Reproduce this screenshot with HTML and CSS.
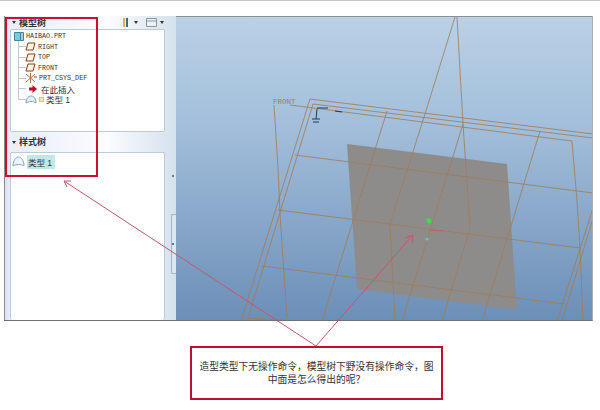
FILE: index.html
```html
<!DOCTYPE html>
<html lang="zh-CN">
<head>
    <meta charset="UTF-8">
    <meta name="viewport" content="width=device-width, initial-scale=1.0">
    <title>造型类型</title>
    <link rel="stylesheet" href="styles.css">
</head>
<body>
    <div class="topline"></div>

    <div class="shot">
        <div class="sidebar">
            <div class="trees">
                <div class="tree-head">
                    <span class="caret"></span>
                    <span class="tree-title">模型树</span>
                    <div class="tools">
                        <svg width="9" height="9" viewBox="0 0 9 9"><path d="M1 0h2v9H1z" fill="#d9b84a"/><path d="M4 0h2v9H4z" fill="#39699c"/></svg>
                        <span class="caret small"></span>
                        <svg class="tool-box" width="11" height="9" viewBox="0 0 11 9"><path d="M.5.5h10v8H.5zM.5 3h10" fill="#eef2f6" stroke="#8a949e"/></svg>
                        <span class="caret small"></span>
                    </div>
                </div>

                <div class="panel panel-model">
                    <div class="row root">
                        <svg width="10" height="10" viewBox="0 0 10 10"><path d="M.5 1.5h6v8h-6z" fill="#6fd0d6" stroke="#48809c"/><path d="M6.5 1.5h3v8h-3z" fill="#b6c4d6" stroke="#48809c"/></svg>
                        <span>HAIBAO.PRT</span>
                    </div>
                    <div class="row branch">
                        <svg class="plane" width="11" height="9" viewBox="0 0 11 9"><path d="M3 1h7L8 8H1z" fill="#fff6dc" stroke="#8a3a1e"/></svg>
                        <span>RIGHT</span>
                    </div>
                    <div class="row branch">
                        <svg class="plane" width="11" height="9" viewBox="0 0 11 9"><path d="M3 1h7L8 8H1z" fill="#fff6dc" stroke="#8a3a1e"/></svg>
                        <span>TOP</span>
                    </div>
                    <div class="row branch">
                        <svg class="plane" width="11" height="9" viewBox="0 0 11 9"><path d="M3 1h7L8 8H1z" fill="#fff6dc" stroke="#8a3a1e"/></svg>
                        <span>FRONT</span>
                    </div>
                    <div class="row branch">
                        <svg class="plane" width="12" height="10" viewBox="0 0 12 10"><path d="M1 1l9 8M10 1L1 9M5.500 0v10" fill="none" stroke="#a8734a"/><path d="M9 4h3" stroke="#c03020"/></svg>
                        <span>PRT_CSYS_DEF</span>
                    </div>
                    <div class="row branch">
                        <svg class="insert" width="8" height="8" viewBox="0 0 8 8"><path d="M0 2.500h3.500V0L8 4 3.500 8V5.500H0z" fill="#b80f24"/></svg>
                        <span class="cjk">在此插入</span>
                    </div>
                    <div class="row branch">
                        <svg class="plane" width="12" height="9" viewBox="0 0 12 9"><path d="M1 8C1 3 4 1 6.500 1S11 4 11 8C8 6 4 6 1 8z" fill="#dff0f6" stroke="#7fa2bd"/></svg>
                        <span class="mark"></span>
                        <span class="cjk">类型 1</span>
                    </div>
                </div>

                <div class="tree-head second">
                    <span class="caret"></span>
                    <span class="tree-title">样式树</span>
                </div>

                <div class="panel panel-style">
                    <div class="row style-row">
                        <svg width="13" height="11" viewBox="0 0 13 11"><path d="M1 10C1 4 4 1 6.500 1S12 4 12 10C9 8 4 8 1 10z" fill="#eaf3f8" stroke="#8ba6bd"/></svg>
                        <span class="cjk selected">类型 1</span>
                    </div>
                </div>
            </div>

            <div class="sash">
                <span class="sash-dot"></span>
                <div class="sash-grip"><span class="sash-dot"></span></div>
            </div>
        </div>

        <div class="viewport">
            <svg class="model" viewBox="176 16 417 304" width="417" height="304">
                <path class="sheet" d="M347 143L507 163L517 309L357 288Z"/>
                <g class="wire">
                    <path d="M310 98L593 133M313 103L593 137M290 104L540 136L572 140"/>
                    <path d="M310 98L241 320M313 103L248 317M247 317L313 321"/>
                    <path d="M274 104L278 167L280 213L287 317"/>
                    <path d="M572 140L577 200L580 247L583 320"/>
                    <path d="M593 207L557 320M593 217L562 320"/>
                    <path d="M295 154L593 192M278 209L580 247M262 265L565 303"/>
                    <path d="M387 110L322 320"/>
                    <path d="M455 16L425 113L390 223L395 320"/>
                    <path d="M457 16L463 123L470 227L442 320"/>
                    <path d="M463 123L402 320"/>
                    <path d="M540 130L482 320"/>
                </g>
                <path class="csys" d="M317 108L316 118M317 107H328M335 110L342 111M312 118H320M313 121H319"/>
                <text class="front-label" x="273" y="103">FRONT</text>
                <circle cx="429" cy="220" r="2.500" fill="#3fdc4a"/>
                <circle cx="427" cy="238" r="1.500" fill="#63c6c8"/>
                <path d="M430 229L444 230" stroke="#c0605a"/>
            </svg>
        </div>
    </div>

    <div class="note">造型类型下无操作命令，模型树下野没有操作命令，图中面是怎么得出的呢？</div>

    <!-- 标注 -->
    <div class="callout"></div>
    <svg class="arrows" width="600" height="410" viewBox="0 0 600 410">
        <path d="M316 346L64 181M71 181L64 181L67 187"/>
        <path d="M316 346L412 236M405 238L413 235L412 243"/>
    </svg>
</body>
</html>
```

FILE: styles.css
```css
body {
    font-family: "Liberation Sans", "Noto Sans CJK SC", sans-serif;
    background-color: #fff;
    margin: 0;
    padding: 0;
    width: 600px;
    height: 410px;
    overflow: hidden;
    position: relative;
}

.topline {
    height: 1px;
    background-color: #c8c8c8;
}

.shot {
    display: flex;
    width: 589px;
    height: 305px;
    margin: 15px 0 0 4px;
    border-bottom: 1px solid #6e7072;
    border-right: 1px solid #a9adb0;
    box-sizing: border-box;
    overflow: hidden;
}

.sidebar {
    display: flex;
    flex: 0 0 172px;
    border-left: 1px solid #8c8c8c;
    box-sizing: border-box;
    background: linear-gradient(90deg, #d9dff6 0, #e9eef8 5px, #fbfcfe 60%, #d4e1ee 100%);
}

.trees {
    display: flex;
    flex-direction: column;
    width: 155px;
    margin-left: 5px;
}

.tree-head {
    display: flex;
    align-items: center;
    gap: 3px;
    height: 13px;
    padding-left: 2px;
}

.tree-head.second {
    height: 20px;
}

.tree-title {
    font-size: 9px;
    line-height: 10px;
    font-weight: bold;
    color: #333;
}

.caret {
    width: 0;
    height: 0;
    border-left: 2px solid transparent;
    border-right: 2px solid transparent;
    border-top: 3px solid #333;
}

.tools {
    display: flex;
    align-items: center;
    gap: 3px;
    margin-left: auto;
    margin-right: 1px;
}

.tool-box {
    margin-left: 5px;
}

.panel {
    background-color: #fff;
    border: 1px solid #bccbd9;
    border-radius: 2px;
    box-sizing: border-box;
}

.panel-model {
    height: 103px;
    padding: 1px 0 0 3px;
    background: #fff linear-gradient(#c4c8cc, #c4c8cc) 7px 10px / 1px 59px no-repeat;
}

.panel-style {
    flex: 1;
    padding: 2px 0 0 1px;
    border-bottom: 0;
}

.row {
    display: flex;
    align-items: center;
    gap: 2px;
    height: 10.500px;
    font-family: "Liberation Mono", "Noto Sans CJK SC", monospace;
    font-size: 6.700px;
    color: #333;
}

.branch {
    background: linear-gradient(#c4c8cc, #c4c8cc) 4px 50% / 8px 1px no-repeat;
}

.row .plane {
    margin-left: 11px;
}

.row .insert {
    margin-left: 15px;
    margin-right: 2px;
}

.cjk {
    font-family: "Liberation Sans", "Noto Sans CJK SC", sans-serif;
    font-size: 8.500px;
}

.mark {
    width: 5px;
    height: 5px;
    background-color: #f4e7a0;
    border: 1px solid #d8c873;
    box-sizing: border-box;
}

.style-row {
    height: 13px;
}

.selected {
    background-color: #c4e6e6;
    padding: 1px 3px 1px 1px;
}

.sash {
    flex: 1;
    display: flex;
    flex-direction: column;
    align-items: flex-end;
    padding-top: 159px;
}

.sash-grip {
    display: flex;
    align-items: center;
    justify-content: flex-end;
    width: 5px;
    height: 60px;
    margin-top: 37px;
    border: 1px solid #a5b3c2;
    border-right: 0;
    border-radius: 2px 0 0 2px;
    box-sizing: border-box;
    background-color: #dbe6f0;
}

.sash-dot {
    width: 2px;
    height: 2px;
    margin-right: 2px;
    background-color: #66788a;
}

.viewport {
    flex: 1;
    border-top: 1px solid #8a9096;
    background: linear-gradient(180deg, #bad1e6 0, #a3bfdb 35%, #86a5c7 70%, #6c8fb8 100%);
    overflow: hidden;
}

.model {
    display: block;
}

.sheet {
    fill: #8e8c8a;
}

.wire path {
    fill: none;
    stroke: #a07c58;
    stroke-width: 0.900;
    opacity: 0.9;
}

.csys {
    fill: none;
    stroke: #23375e;
    stroke-width: 1;
}

.front-label {
    font-family: "Liberation Mono", monospace;
    font-size: 7.500px;
    fill: #94805f;
}

.note {
    width: 253px;
    height: 54px;
    margin: 25px 0 0 190px;
    padding: 0 6px;
    border: 2px solid #c2102c;
    box-sizing: border-box;
    display: flex;
    align-items: center;
    text-align: center;
    font-size: 9.750px;
    line-height: 13px;
    color: #333;
}

.callout {
    position: absolute;
    left: 5px;
    top: 17px;
    width: 93px;
    height: 160px;
    border: 2px solid #cc1030;
    box-sizing: border-box;
}

.arrows {
    position: absolute;
    left: 0;
    top: 0;
    pointer-events: none;
}

.arrows path {
    fill: none;
    stroke: #c4566a;
    stroke-width: 1;
}
```
